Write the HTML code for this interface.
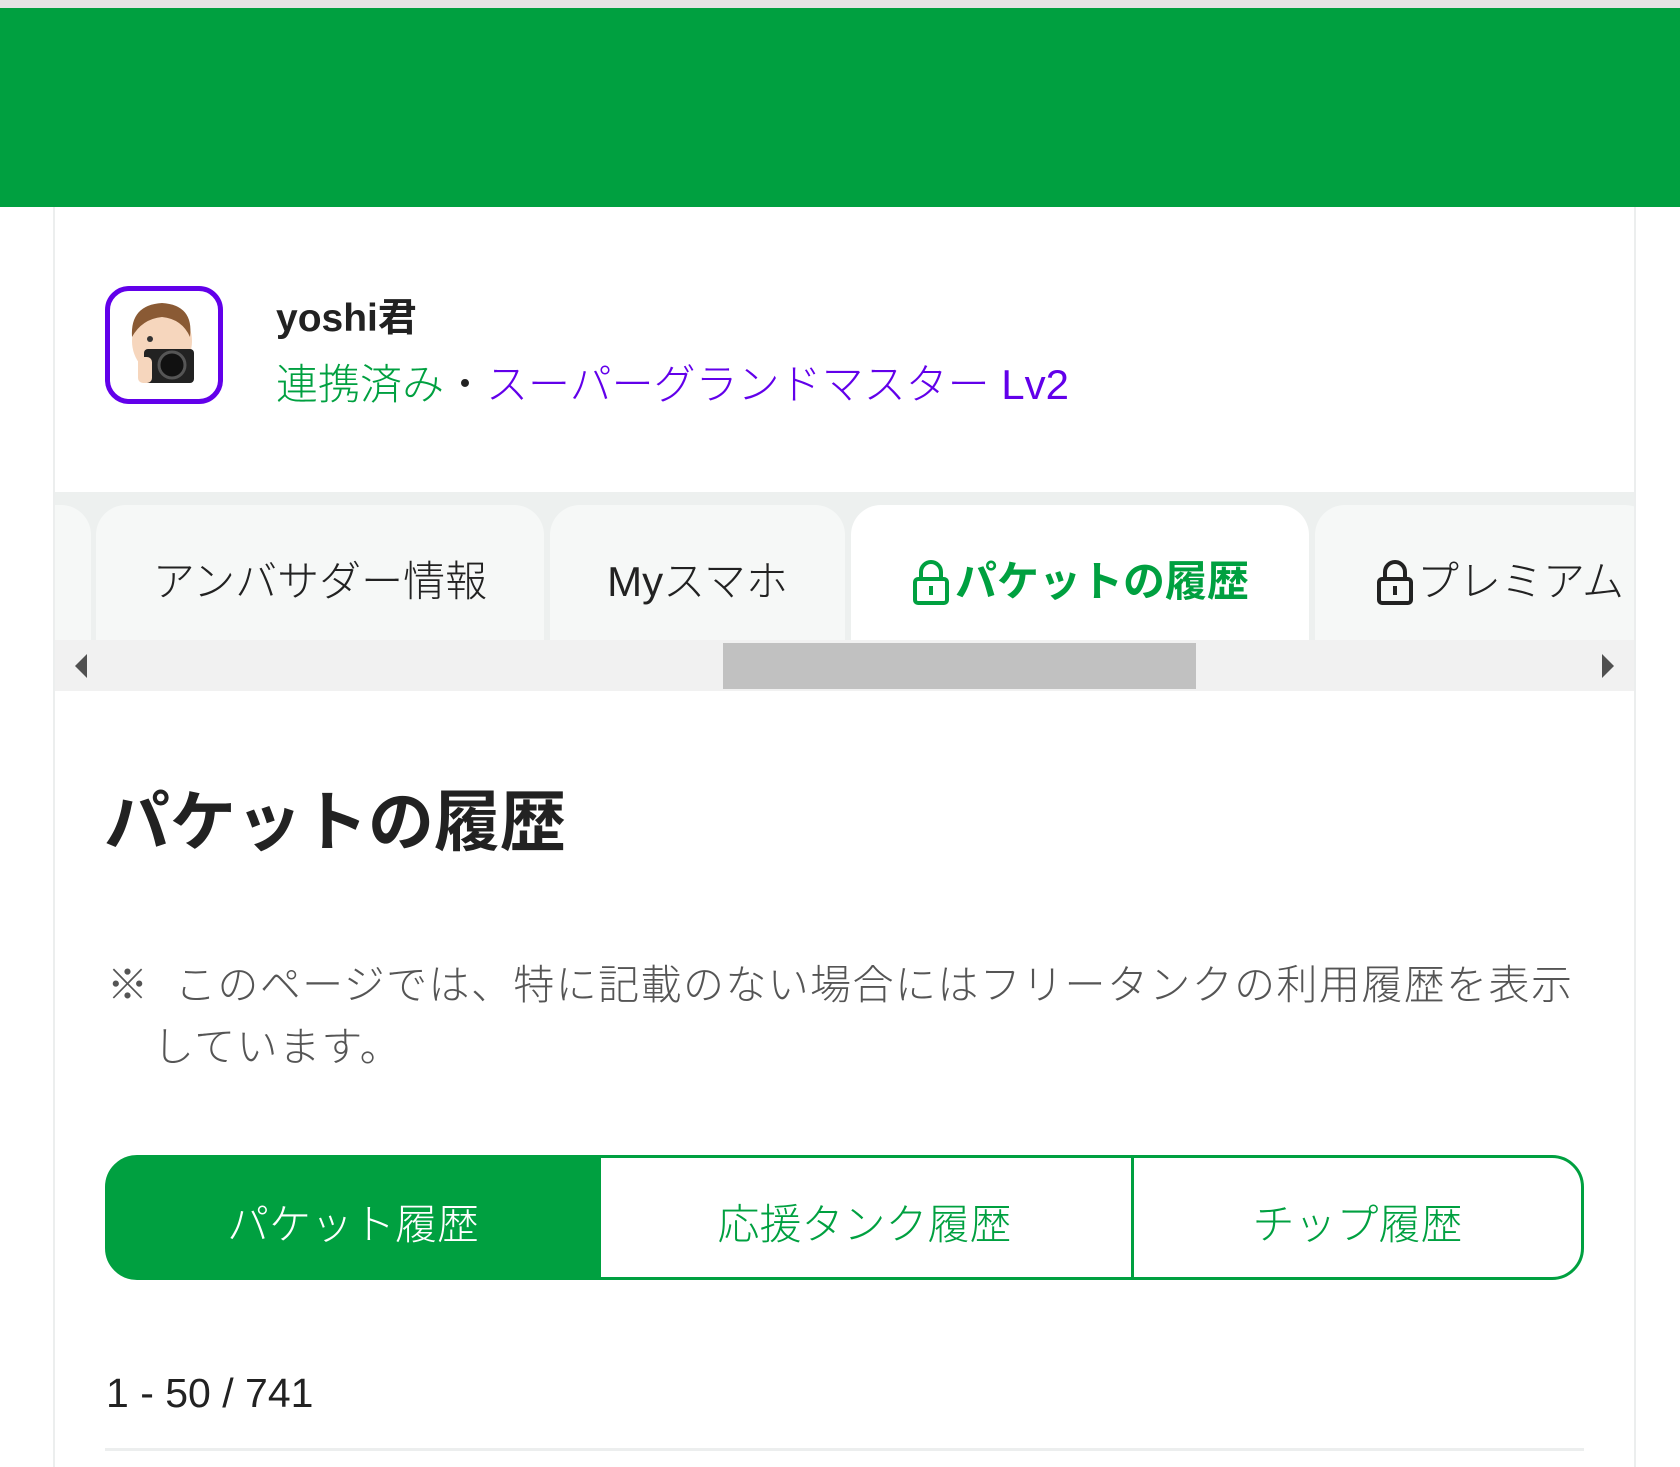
<!DOCTYPE html>
<html><head><meta charset="utf-8"><style>
*{margin:0;padding:0;box-sizing:border-box}
body{width:1680px;height:1452px;overflow:hidden;background:#fff;font-family:"Liberation Sans","Noto Sans CJK JP",sans-serif;color:#222;position:relative}
.abs{position:absolute;white-space:nowrap}
.top{position:absolute;left:0;top:0;width:1680px;height:9px;background:#e4e4e4}
.green{position:absolute;left:0;top:8px;width:1680px;height:199px;background:#00a040}
.cont{position:absolute;left:53px;top:207px;width:1583px;height:1260px;border-left:2px solid #eceeee;border-right:2px solid #eceeee}
.av{position:absolute;left:105px;top:286px;width:118px;height:118px;border:5px solid #6200ea;border-radius:24px;background:#fff;overflow:hidden}
.tabbar{position:absolute;left:55px;top:492px;width:1579px;height:148px;background:#edf0ef;overflow:hidden}
.tab{position:absolute;top:13px;height:135px;padding-top:12px;background:#f6f8f7;border-radius:30px 30px 0 0;font-size:42px;font-weight:300;display:flex;align-items:center;justify-content:center;color:#222}
.sb{position:absolute;left:55px;top:640px;width:1579px;height:51px;background:#f1f1f1}
.seg{position:absolute;top:1155px;height:125px;padding-top:8px;border:3px solid #00a040;display:flex;align-items:center;justify-content:center;font-size:42px;font-weight:300;color:#00a040}
</style></head><body>
<div class="top"></div>
<div class="green"></div>
<div class="cont"></div>
<div class="av">
<svg width="108" height="108" viewBox="0 0 108 108">
<ellipse cx="52" cy="50" rx="30" ry="34" fill="#f6d6bd"/>
<path d="M22 46 Q20 14 52 12 Q84 14 80 46 Q72 28 52 26 Q32 28 22 46Z" fill="#8a5a34"/>
<circle cx="40" cy="48" r="3" fill="#333"/>
<rect x="34" y="58" width="50" height="34" rx="4" fill="#222"/>
<circle cx="62" cy="74" r="13" fill="#111" stroke="#555" stroke-width="3"/>
<rect x="28" y="66" width="14" height="26" rx="5" fill="#f6d6bd"/>
</svg></div>
<div class="abs" style="left:276px;top:294px;font-size:39px;font-weight:bold;line-height:50px">yoshi君</div>
<div class="abs" style="left:276px;top:358px;font-size:42px;font-weight:300;line-height:54px"><span style="color:#00a040">連携済み</span><span style="color:#222">・</span><span style="color:#6200ea">スーパーグランドマスター Lv2</span></div>
<div class="tabbar">
<div class="tab" style="left:-60px;width:96px"></div>
<div class="tab" style="left:41px;width:448px">アンバサダー情報</div>
<div class="tab" style="left:495px;width:295px">Myスマホ</div>
<div class="tab" style="left:796px;width:458px;background:#fff;color:#00a040;font-weight:bold"><svg width="40" height="46" viewBox="0 0 40 46" style="margin-right:4px;margin-top:6px"><path d="M10 20V13a10 10 0 0 1 20 0v7" fill="none" stroke="#00a040" stroke-width="4"/><rect x="4" y="20" width="32" height="24" rx="3" fill="none" stroke="#00a040" stroke-width="4"/><rect x="18" y="27" width="4" height="9" fill="#00a040"/></svg>パケットの履歴</div>
<div class="tab" style="left:1260px;width:340px;justify-content:flex-start;padding-left:60px"><svg width="40" height="46" viewBox="0 0 40 46" style="margin-right:2px;margin-top:6px"><path d="M10 20V13a10 10 0 0 1 20 0v7" fill="none" stroke="#222" stroke-width="4"/><rect x="4" y="20" width="32" height="24" rx="3" fill="none" stroke="#222" stroke-width="4"/><rect x="18" y="27" width="4" height="9" fill="#222"/></svg>プレミアム</div>
</div>
<div class="sb">
<div style="position:absolute;left:668px;top:3px;width:473px;height:46px;background:#c1c1c1"></div>
<svg style="position:absolute;left:20px;top:14px" width="14" height="24"><path d="M12 0V24L0 12Z" fill="#505050"/></svg>
<svg style="position:absolute;left:1545px;top:14px" width="14" height="24"><path d="M2 0V24L14 12Z" fill="#505050"/></svg>
</div>
<div class="abs" style="left:104px;top:780px;font-size:66px;font-weight:bold;line-height:84px;color:#222">パケットの履歴</div>
<div class="abs" style="left:107px;top:954px;font-size:41px;font-weight:300;line-height:62px;color:#555;letter-spacing:1.4px">※&nbsp; このページでは、特に記載のない場合にはフリータンクの利用履歴を表示</div>
<div class="abs" style="left:153px;top:1016px;font-size:41px;font-weight:300;line-height:62px;color:#555;letter-spacing:1.4px">しています。</div>
<div class="seg" style="left:105px;width:496px;background:#00a040;color:#fff;border-radius:32px 0 0 32px">パケット履歴</div>
<div class="seg" style="left:598px;width:536px;border-left:0">応援タンク履歴</div>
<div class="seg" style="left:1131px;width:453px;border-radius:0 32px 32px 0">チップ履歴</div>
<div class="abs" style="left:106px;top:1366px;font-size:41px;font-weight:300;line-height:54px;color:#222">1 - 50 / 741</div>
<div style="position:absolute;left:105px;top:1448px;width:1479px;height:3px;background:#eceeee"></div>
</body></html>
